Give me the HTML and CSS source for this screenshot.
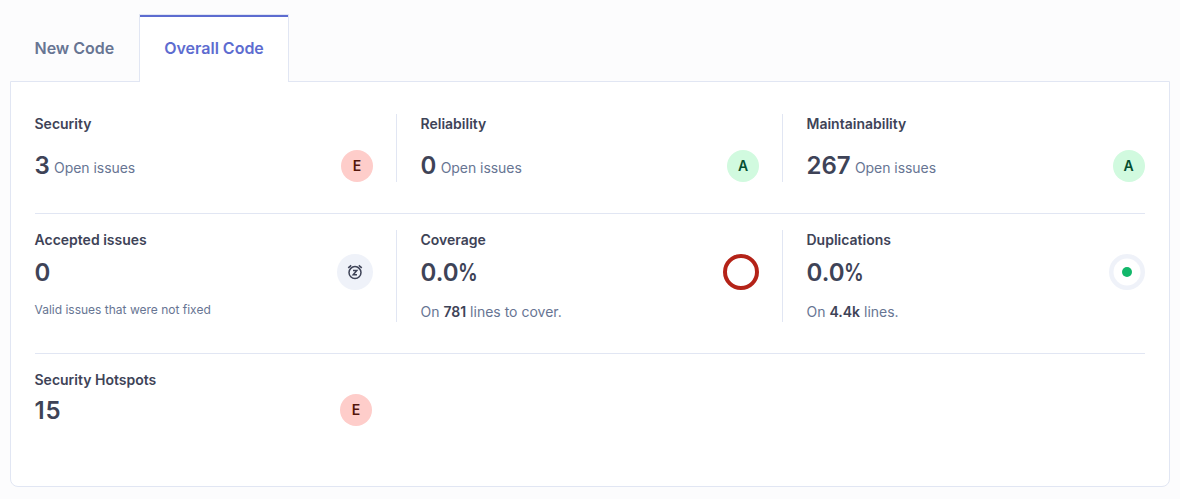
FILE: index.html
```html
<!DOCTYPE html>
<html lang="en">
<head>
<meta charset="utf-8">
<title>Overall Code</title>
<link rel="stylesheet" href="styles.css">
</head>
<body>
<nav class="tabs">
  <a class="tab">New Code</a>
  <a class="tab active">Overall Code</a>
</nav>
<main class="panel">
  <section class="row ratings">
    <article class="card"><h2>Security</h2><div class="line"><p><strong>3</strong><span>Open issues</span></p><span class="badge e">E</span></div></article>
    <article class="card"><h2>Reliability</h2><div class="line"><p><strong>0</strong><span>Open issues</span></p><span class="badge a">A</span></div></article>
    <article class="card"><h2>Maintainability</h2><div class="line"><p><strong>267</strong><span>Open issues</span></p><span class="badge a">A</span></div></article>
  </section>
  <section class="row measures">
    <article class="card"><h2>Accepted issues</h2><div class="line"><strong>0</strong>
      <span class="snooze"><svg width="16" height="16" viewBox="0 0 16 16" fill="none" stroke="#3e4357" stroke-width="1.5"><circle cx="8" cy="8.6" r="6"/><path d="M1.2 3.9 4.2 1.4M14.8 3.9 11.8 1.4"/><path d="M6 6.5h3.8L6.2 10.7H10"/></svg></span></div><p class="note small">Valid issues that were not fixed</p></article>
    <article class="card"><h2>Coverage</h2><div class="line"><strong>0.0<span class="percent">%</span></strong>
      <svg width="36" height="36" viewBox="0 0 36 36"><circle cx="18" cy="18" r="16" fill="none" stroke="#b42318" stroke-width="4"/></svg></div><p class="note">On <b>781</b> lines to cover.</p></article>
    <article class="card"><h2>Duplications</h2><div class="line"><strong>0.0<span class="percent">%</span></strong>
      <svg width="36" height="36" viewBox="0 0 36 36"><circle cx="18" cy="18" r="15.75" fill="none" stroke="#eff2f9" stroke-width="4.5"/><circle cx="18" cy="18" r="5" fill="#12b76a"/></svg></div><p class="note">On <b>4.4k</b> lines.</p></article>
  </section>
  <section class="row hotspots">
    <article class="card"><h2>Security Hotspots</h2><div class="line"><strong class="spaced">15</strong><span class="badge e">E</span></div></article>
  </section>
</main>
</body>
</html>
```
FILE: styles.css
```css
* { box-sizing: border-box; }
body { margin: 0; height: 499px; padding: 14px 10px 12px; background: #fcfcfd; color: #3e4357; font: 14px/20px Inter, sans-serif; display: flex; flex-direction: column; overflow: hidden; }
h2, p { margin: 0; }
.tabs { display: flex; height: 68px; margin-bottom: -1px; position: relative; }
.tab { padding: 21px 24px 0 23.5px; font-size: 16px; line-height: 24px; font-weight: 600; color: #677593; border: 1px solid transparent; border-bottom: 0; }
.tab:first-child { padding-right: 23.5px; }
.tab.active { padding-left: 24.4px; color: #5d6cd0; background: #fff; border-color: #e1e6f3; box-shadow: inset 0 2px #5d6cd0; }
.panel { flex: 1; background: #fff; border: 1px solid #e1e6f3; border-radius: 0 0 8px 8px; padding: 32px 24px 0 23.5px; }
.row { display: grid; grid-template-columns: 361.5px 386px 362.5px; }
.ratings { height: 100px; border-bottom: 1px solid #e1e6f3; }
.measures { height: 140px; padding-top: 16px; border-bottom: 1px solid #e1e6f3; }
.hotspots { padding-top: 16px; }
.card { padding: 0 23px 0 0; }
.card + .card { padding-left: 23.5px; border-left: 1px solid #e1e6f3; }
.card + .card:last-child { padding-right: 0; }
.ratings .card { height: 68px; }
.measures .card { height: 92px; }
.hotspots .card { padding-right: 24px; }
h2 { font-size: 14px; line-height: 20px; font-weight: 600; }
strong { font-size: 24px; line-height: 32px; padding-top: 1px; font-weight: 600; }
.percent { display: inline-block; transform: scaleX(0.82); transform-origin: left; }
.spaced { letter-spacing: 0.8px; }
.line { display: flex; justify-content: space-between; align-items: center; }
.ratings .line { margin-top: 16px; height: 32px; }
.measures .line { margin-top: 4px; height: 36px; }
.hotspots .line { margin-top: 4px; height: 32px; }
.ratings .line p { display: flex; align-items: flex-start; gap: 4.3px; color: #677593; }
.ratings .line p span { padding-top: 8px; letter-spacing: -0.05px; }
.ratings strong { padding-top: 0; color: #3e4357; }
.badge { width: 32px; height: 32px; border-radius: 50%; text-align: center; font-weight: 600; line-height: 32px; }
.badge.e { background: #fecdca; color: #55160c; }
.badge.a { background: #d1fadf; color: #054f31; }
.snooze { width: 36px; height: 36px; border-radius: 50%; background: #eff2f9; display: flex; align-items: center; justify-content: center; }
.note { color: #677593; margin-top: 12px; }
.note b { color: #3e4357; font-weight: 600; }
.small { font-size: 12px; line-height: 16px; }
```
